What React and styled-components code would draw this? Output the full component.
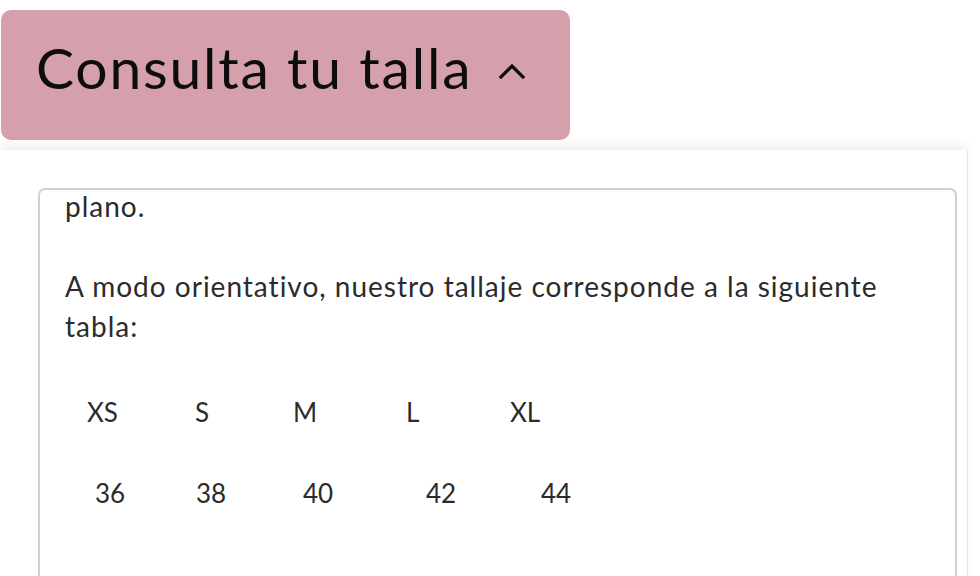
import styled, { createGlobalStyle } from "styled-components";

const GlobalStyle = createGlobalStyle`
  body {
    margin: 0;
    background: #ffffff;
    font-family: "Lato", "Liberation Sans", sans-serif;
  }
`;

const Page = styled.div`
  width: 980px;
  height: 576px;
  overflow: hidden;
  background: #ffffff;
  padding-top: 10px;
  box-sizing: border-box;
`;

const Toggle = styled.button`
  display: flex;
  align-items: center;
  gap: 27px;
  width: 569px;
  height: 130px;
  margin-left: 1px;
  padding: 0 0 17px 35px;
  box-sizing: border-box;
  border: none;
  border-radius: 10px;
  background: #d59fab;
  color: #0d0d0d;
  font-family: "Lato", "Liberation Sans", sans-serif;
  font-size: 57px;
  letter-spacing: 1.8px;
  font-weight: 400;
  cursor: pointer;
  text-align: left;
`;

const ChevronIcon = styled.svg`
  margin-top: 8px;
  flex: none;
`;

const Panel = styled.section`
  margin-top: 10px;
  width: 967px;
  height: 440px;
  background: #ffffff;
  box-shadow: 0 -6px 10px rgba(0, 0, 0, 0.06), 1px 0 0 #ececec;
  padding: 38px 0 0 38px;
  box-sizing: border-box;
`;

const InfoBox = styled.div`
  width: 919px;
  height: 420px;
  box-sizing: border-box;
  border: 2px solid #d3cfcc;
  border-bottom: none;
  border-radius: 7px 7px 0 0;
  padding: 0 30px 0 25px;
  overflow: hidden;
  color: #2b2b2b;
  font-size: 28px;
  letter-spacing: 1px;
  line-height: 40px;
`;

const Scrolled = styled.div`
  margin-top: -4px;
`;

const Para = styled.p`
  margin: 0 0 40px;
`;

const SizeRow = styled.div`
  display: flex;
  padding-left: ${(p) => p.$indent}px;
  margin-top: ${(p) => p.$top}px;
  font-size: 26px;
  letter-spacing: 0;
  line-height: 40px;
`;

const Cell = styled.span`
  flex: 0 0 ${(p) => p.$w}px;
`;

const labels = [
  ["XS", 108],
  ["S", 98],
  ["M", 113],
  ["L", 104],
  ["XL", 60],
];

const numbers = [
  ["36", 101],
  ["38", 107],
  ["40", 123],
  ["42", 115],
  ["44", 60],
];

function Chevron() {
  return (
    <ChevronIcon width="26" height="16" viewBox="0 0 26 16" aria-hidden="true">
      <path
        d="M2 14 L13 3 L24 14"
        fill="none"
        stroke="#0d0d0d"
        strokeWidth="3.2"
        strokeLinecap="square"
      />
    </ChevronIcon>
  );
}

function App() {
  return (
    <>
      <GlobalStyle />
      <Page>
        <Toggle type="button">
          Consulta tu talla
          <Chevron />
        </Toggle>
        <Panel>
          <InfoBox>
            <Scrolled>
              <Para>plano.</Para>
              <Para>
                A modo orientativo, nuestro tallaje corresponde a la siguiente
                tabla:
              </Para>
              <SizeRow $indent={22} $top={46}>
                {labels.map(([t, w]) => (
                  <Cell key={t} $w={w}>
                    {t}
                  </Cell>
                ))}
              </SizeRow>
              <SizeRow $indent={30} $top={41}>
                {numbers.map(([t, w]) => (
                  <Cell key={t} $w={w}>
                    {t}
                  </Cell>
                ))}
              </SizeRow>
            </Scrolled>
          </InfoBox>
        </Panel>
      </Page>
    </>
  );
}

export default App;
